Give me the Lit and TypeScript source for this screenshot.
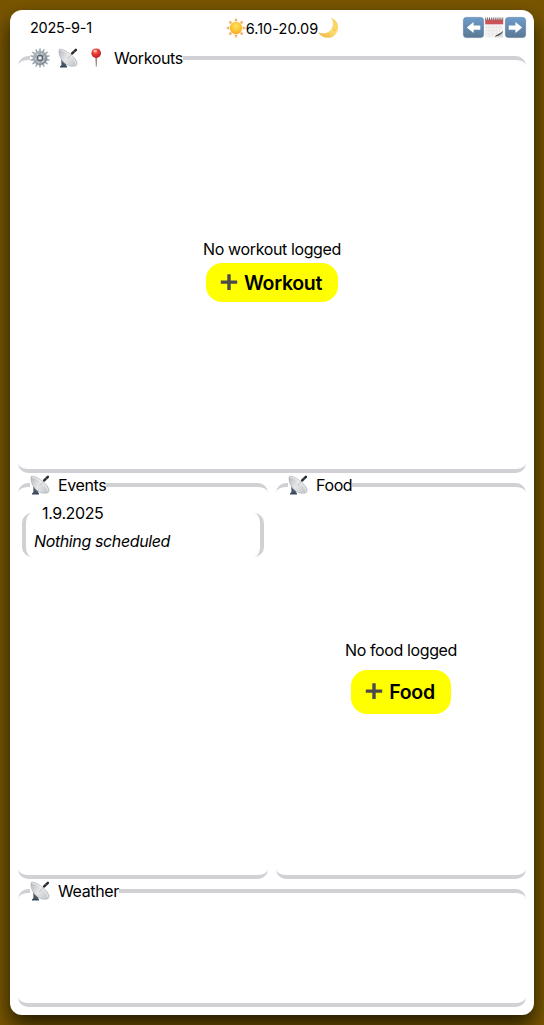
import { LitElement, html, css, svg } from "lit";
import { customElement, property } from "lit/decorators.js";

const teeth = Array.from({ length: 14 }, (_, i) => (i * 360) / 14);
const rays = Array.from({ length: 8 }, (_, i) => i * 45);

const shapes: Record<string, unknown> = {
  gear: svg`
    <defs><linearGradient id="g" x1="0" y1="0" x2="1" y2="1"><stop offset="0" stop-color="#b3bcc1"/><stop offset="1" stop-color="#78838a"/></linearGradient></defs>
    ${teeth.map((a) => svg`<path d="M9 3.2 L9.5 .2 H10.5 L11 3.2Z" fill="#98a3a9" transform="rotate(${a} 10 10)"/>`)}
    <circle cx="10" cy="10" r="6.2" fill="#c9d0d4" stroke="url(#g)" stroke-width="2"/>
    <circle cx="10" cy="10" r="4.6" fill="none" stroke="#9ca6ac" stroke-width="1.4" stroke-dasharray="2.8 2"/>
    <circle cx="10" cy="10" r="2.8" fill="#a9b4ba" stroke="#56616a" stroke-width="1.2"/>
    <circle cx="10" cy="10" r="1.1" fill="#fff"/>`,
  dish: svg`
    <defs><linearGradient id="d" x1="0" y1=".2" x2="1" y2=".8"><stop offset="0" stop-color="#bcbfc2"/><stop offset=".45" stop-color="#e6e7e9"/><stop offset="1" stop-color="#c3c6ca"/></linearGradient></defs>
    <path d="M3.3 11 L7.8 14.4 L8.6 19 H2.4 L3.4 16.8Z" fill="#4c5660"/>
    <path d="M2 18.2 Q5 16.6 9 18.3 V19.6 H2Z" fill="#34495f"/>
    <path d="M1.2 1.5 C.2 5.5 2.2 12.5 8.2 16.4 C12 18.8 17 18.9 18.8 17 C20.2 14.6 17.2 9.8 12.3 6 C7.6 2.3 2.8 .3 1.2 1.5Z" fill="url(#d)" stroke="#a3a6aa" stroke-width=".5"/>
    <path d="M2 2.2 C6 1.6 17.5 10.5 18.2 16.6" fill="none" stroke="#f4f4f5" stroke-width=".8"/>
    <path d="M9.4 10.8 L14.6 5.2" fill="none" stroke="#a9adb1" stroke-width=".6"/>
    <path d="M14.2 5.4 L17.9 1.9" stroke="#282a2c" stroke-width="2.5" stroke-linecap="round"/>
    <path d="M15.2 2.8 L17 4.6" stroke="#8f9294" stroke-width=".6"/>`,
  pin: svg`
    <defs><radialGradient id="p" cx=".4" cy=".3" r=".75"><stop offset="0" stop-color="#ff7a70"/><stop offset=".45" stop-color="#e93834"/><stop offset="1" stop-color="#b9191d"/></radialGradient></defs>
    <path d="M9.3 9 H11.2 L10.8 18.6 H9.8Z" fill="#a5887c"/>
    <circle cx="10.2" cy="5.2" r="4.8" fill="url(#p)"/>
    <ellipse cx="9.2" cy="3.2" rx="1.7" ry="1.1" fill="#ffc1b8"/>`,
  sun: svg`
    <defs><radialGradient id="s" cx=".5" cy=".35" r=".65"><stop offset="0" stop-color="#ffe45c"/><stop offset="1" stop-color="#f7ab21"/></radialGradient></defs>
    ${rays.map((a) => svg`<path d="M8.3 3.2 L10 -.2 L11.7 3.2Z" fill="#f0ae62" transform="rotate(${a} 10 10)"/>`)}
    <circle cx="10" cy="10" r="6.2" fill="url(#s)"/>`,
  moon: svg`
    <defs><linearGradient id="m" x1="1" y1="0" x2=".3" y2="1"><stop offset="0" stop-color="#f9cf55"/><stop offset=".6" stop-color="#fbdc70"/><stop offset="1" stop-color="#eebb48"/></linearGradient></defs>
    <path d="M13.2 -.2 C18.2 1.6 20.9 6.5 19.9 11.4 C18.7 17 13.8 20.3 8.8 19.8 C5 19.4 1.8 17.4 .2 14.3 C4.5 16.2 9.6 15.4 12.7 11.9 C15.6 8.5 15.7 3.5 13.2 -.2Z" fill="url(#m)"/>
    <circle cx="16.3" cy="12" r=".9" fill="#edbd4c"/><circle cx="11.2" cy="17" r=".8" fill="#edbd4c"/>`,
  left: svg`
    <defs><linearGradient id="l" x1="0" y1="0" x2="0" y2="1"><stop offset="0" stop-color="#6d9ccb"/><stop offset="1" stop-color="#5b7894"/></linearGradient></defs>
    <rect x=".4" y=".4" width="20.2" height="20.2" rx="3" fill="url(#l)" stroke="#587c9e" stroke-width=".6"/>
    <path d="M3.8 10.5 L10.6 5 V8.5 H17.3 V12.7 H10.6 V16.1Z" fill="#fff"/>`,
  right: svg`
    <defs><linearGradient id="r" x1="0" y1="0" x2="0" y2="1"><stop offset="0" stop-color="#6d9ccb"/><stop offset="1" stop-color="#5b7894"/></linearGradient></defs>
    <rect x=".4" y=".4" width="20.2" height="20.2" rx="3" fill="url(#r)" stroke="#587c9e" stroke-width=".6"/>
    <path d="M17.2 10.5 L10.4 5 V8.5 H3.7 V12.7 H10.4 V16.1Z" fill="#fff"/>`,
  calendar: svg`
    <path d="M1.2 2 H19.2 V14.2 L13.2 20.6 H1.2Z" fill="#f3f2f2"/>
    <path d="M1.2 2.6 H19.2 V7.3 H1.2Z" fill="#c9545a"/>
    <path d="M1.2 1.7 H19.2" stroke="#75696c" stroke-width="2.6" stroke-dasharray="1 .9"/>
    <path d="M1.5 10.5 H19 M1.5 13.7 H17 M1.5 17 H14 M5 8 V20 M8.7 8 V20 M12.4 8 V18 M16 8 V14" stroke="#e0dfdf" stroke-width=".5"/>
    <path d="M12.6 20.6 L19.2 14 V20.6Z" fill="#dcdcdc"/>
    <path d="M10.8 20 C12.5 17 15.2 17.6 19.2 13.8 C18 17.5 15 19 10.8 20Z" fill="#4c4a4a"/>`,
  plus: svg`<path d="M8.3 1.2 H11.7 V7.4 H18.2 V10.8 H11.7 V17 H8.3 V10.8 H1.8 V7.4 H8.3Z" fill="#4b4b4b"/>`,
};

@customElement("emoji-icon")
export class EmojiIcon extends LitElement {
  @property() name = "";
  @property({ type: Number }) box = 20;

  static styles = css`
    :host { display: block; flex: none; width: 20px; height: 20px; }
    :host([box="21"]) { width: 21px; height: 21px; }
    svg { display: block; width: 100%; height: 100%; overflow: visible; }
  `;

  render() {
    return html`<svg viewBox="0 0 ${this.box} ${this.box}" aria-hidden="true">${shapes[this.name]}</svg>`;
  }
}

@customElement("titled-panel")
export class TitledPanel extends LitElement {
  @property() heading = "";
  @property({ type: Array }) icons: string[] = [];

  static styles = css`
    :host {
      display: flex; flex-direction: column; box-sizing: border-box; min-width: 0;
      border: solid #d0d0d5; border-width: 4px 0; border-radius: 10px;
    }
    .legend {
      display: flex; align-items: center; gap: 8px; align-self: flex-start;
      height: 20px; margin: -12px 0 0 12px; background: #fff; white-space: nowrap;
    }
    .body { flex: 1; display: flex; flex-direction: column; min-height: 0; }
  `;

  render() {
    return html`
      <div class="legend">
        ${this.icons.map((n) => html`<emoji-icon name=${n}></emoji-icon>`)}
        <span>${this.heading}</span>
      </div>
      <div class="body"><slot></slot></div>`;
  }
}

@customElement("app-root")
export class AppRoot extends LitElement {
  static styles = css`
    :host {
      display: block; box-sizing: border-box; height: 100vh; padding: 10px;
      background: #785600; color: #000; overflow: hidden;
      font: 16px/20px Inter, Roboto, sans-serif; letter-spacing: -0.38px;
    }
    .card {
      box-sizing: border-box; height: 100%; padding: 0 8px 8px;
      display: grid; grid-template: 36px 417fr 396fr 118fr / 1fr 1fr; gap: 10px 8px;
      background: #fff; border-radius: 12px; box-shadow: 0 10px 20px rgba(0, 0, 0, 0.7);
    }
    .top {
      grid-column: 1 / -1; display: grid; grid-template-columns: 1fr auto 1fr;
      align-items: center; font-size: 14.5px; letter-spacing: -0.25px;
    }
    .date { padding-left: 12px; }
    .daylight, .nav { display: flex; align-items: center; }
    .daylight { padding-left: 20px; letter-spacing: 0.05px; }
    .hours { padding-top: 1px; }
    .nav { justify-content: flex-end; padding-bottom: 2px; }
    .wide { grid-column: 1 / -1; }
    .empty { flex: 1; display: flex; flex-direction: column; align-items: center; }
    .workout { padding-top: 171px; gap: 4px; }
    .food { padding-top: 145px; gap: 10px; }
    .add {
      display: flex; align-items: center; gap: 5px; box-sizing: border-box;
      height: 39px; padding: 0 16px 0 13px; border: 0; border-radius: 16px;
      background: #ff0; color: #000; font: 600 19.5px/24px Inter, Roboto, sans-serif; letter-spacing: -0.3px;
    }
    .food .add { height: 44px; }
    .day {
      margin: 18px 4px 0; box-sizing: border-box; height: 44px; padding: 0 8px;
      border: solid #d0d0d5; border-width: 0 4px; border-radius: 10px;
    }
    .day-title { width: max-content; margin: -10px 0 8px; padding-left: 8px; }
    .note { font-style: italic; }
  `;

  render() {
    return html`
      <main class="card">
        <header class="top">
          <span class="date">2025-9-1</span>
          <span class="daylight">
            <emoji-icon name="sun"></emoji-icon><span class="hours">6.10-20.09</span><emoji-icon name="moon"></emoji-icon>
          </span>
          <nav class="nav">
            <emoji-icon name="left" box="21"></emoji-icon>
            <emoji-icon name="calendar" box="21"></emoji-icon>
            <emoji-icon name="right" box="21"></emoji-icon>
          </nav>
        </header>
        <titled-panel class="wide" heading="Workouts" .icons=${["gear", "dish", "pin"]}>
          <div class="empty workout">
            <span>No workout logged</span>
            <button class="add"><emoji-icon name="plus"></emoji-icon>Workout</button>
          </div>
        </titled-panel>
        <titled-panel heading="Events" .icons=${["dish"]}>
          <section class="day">
            <div class="day-title">1.9.2025</div>
            <div class="note">Nothing scheduled</div>
          </section>
        </titled-panel>
        <titled-panel heading="Food" .icons=${["dish"]}>
          <div class="empty food">
            <span>No food logged</span>
            <button class="add"><emoji-icon name="plus"></emoji-icon>Food</button>
          </div>
        </titled-panel>
        <titled-panel class="wide" heading="Weather" .icons=${["dish"]}></titled-panel>
      </main>`;
  }
}
